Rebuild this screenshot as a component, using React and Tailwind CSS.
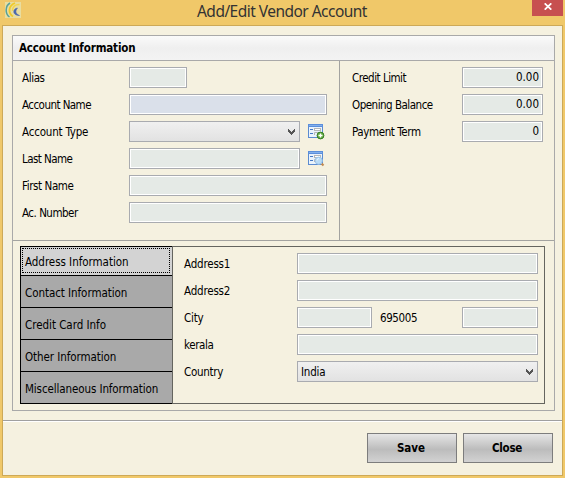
import React from "react";
import clsx from "clsx";

const fieldBase = "h-[21px] border border-[#a9abb0] shrink-0";

function Field({ className, value, blue }) {
  return (
    <div className={clsx(fieldBase, "bg-white p-px", className)}>
      <div
        className={clsx(
          "flex h-full w-full items-center justify-end pr-0.5 text-[11.5px] leading-none",
          blue ? "bg-[#dae0ea]" : "bg-[#e5eae6]"
        )}
      >
        <span>{value}</span>
      </div>
    </div>
  );
}

function Combo({ className, value }) {
  return (
    <div
      className={clsx(
        fieldBase,
        "flex items-center justify-between bg-linear-to-b from-[#f0f0f0] to-[#e2e2e2] pl-[3px] pr-1 text-[11.5px] leading-none",
        className
      )}
    >
      <span className="relative top-px tracking-[-0.2px]">{value}</span>
      <svg width="7" height="6" viewBox="0 0 7 6" shapeRendering="crispEdges" fill="#555">
        <path d="M0 0h1v1h1v1h1v1h1V2h1V1h1V0h1v3H6v1H5v1H4v1H3V5H2V4H1V3H0z" />
      </svg>
    </div>
  );
}

function Row({ label, labelClass, spacing, children }) {
  return (
    <div className="flex h-[21px] items-center">
      <div className={clsx("shrink-0 whitespace-nowrap", labelClass)}>
        <span className={clsx("relative top-px", spacing)}>{label}</span>
      </div>
      {children}
    </div>
  );
}

function FormIcon({ kind }) {
  return (
    <svg className="ml-2 shrink-0" width="17" height="16" viewBox="0 0 17 16">
      <rect x="0.5" y="0.5" width="14" height="13" fill="#eaf3fc" stroke="#5b8bd0" />
      <rect x="0" y="0" width="15" height="3" fill="#5c8fdb" />
      <rect x="1" y="1" width="13" height="1" fill="#83b0ec" />
      <path d="M2 5.500h3M2 9.500h3" stroke="#4478c4" />
      <rect x="6.500" y="4.500" width="6" height="2" fill="#fff" stroke="#b4b6b8" />
      <path d="M6.500 11V8.500h4" fill="none" stroke="#b4b6b8" />
      {kind === "add" ? (
        <g>
          <circle cx="12.500" cy="11.500" r="3.400" fill="#63ad3f" stroke="#347c24" />
          <path d="M12.500 9.500v4M10.500 11.500h4" stroke="#fff" strokeWidth="1.300" />
        </g>
      ) : (
        <g>
          <path d="M13.500 12.500l2 2" stroke="#c28a50" strokeWidth="2.200" />
          <circle cx="10.700" cy="9.700" r="3.600" fill="#b9dbf6" stroke="#9bc4e8" />
          <path d="M9 9.500a2 2 0 0 1 2-2" stroke="#e9f5ff" fill="none" />
        </g>
      )}
    </svg>
  );
}

const tabs = [
  ["Address Information", "h-7", "tracking-[-0.04px]"],
  ["Contact Information", "h-[31px]", "tracking-[-0.06px]"],
  ["Credit Card Info", "h-[31px]", "tracking-[-0.03px]"],
  ["Other Information", "h-[31px]", "tracking-[-0.08px]"],
  ["Miscellaneous Information", "h-[31px]", "tracking-[-0.1px]"],
];

function Button({ spacing, children }) {
  return (
    <button className="h-[30px] w-[90px] border border-[#7d7d7d] bg-linear-to-b from-[#e6e6e6] via-[#bcbcbc] via-55% to-[#d2d2d2] text-[11.5px] font-bold leading-none">
      <span className={clsx("relative top-px", spacing)}>{children}</span>
    </button>
  );
}

export default function App() {
  const left = "w-[107px]";
  const right = "w-[110px]";
  const addr = "w-[113px]";
  return (
    <div className="flex h-[478px] w-[565px] flex-col overflow-hidden bg-[#f0c869] font-['DejaVu_Sans_Condensed','DejaVu_Sans',sans-serif] text-[11.5px] leading-none text-black [font-stretch:condensed]">
      <header className="flex h-[25px] shrink-0 items-start">
        <svg className="ml-[5px] mt-0.5 shrink-0" width="16" height="16" viewBox="0 0 16 16">
          <rect width="16" height="16" fill="#e8dda0" />
          <path d="M5 1C0 4 0 12 4.500 15" fill="none" stroke="#55a099" strokeWidth="1.500" />
          <path d="M10 1C3 4 3 11 8 14.500" fill="none" stroke="#f0ca28" strokeWidth="1.800" />
          <path d="M14.500 2.500C10 2.500 7.500 5 7.500 9" fill="none" stroke="#f2d44d" strokeWidth="1.400" />
          <path d="M12.500 6C7 7 7.500 13.500 14.500 13.500C10.500 12 9.900 9 12.500 6z" fill="#4b68ad" stroke="#4b68ad" strokeWidth="0.600" />
        </svg>
        <h1 className="ml-44 mt-0.5 w-[171px] shrink-0 whitespace-nowrap text-[15.5px] leading-[18px] tracking-[-0.53px] text-[#333] [font-family:'Noto_Sans',sans-serif] [font-stretch:normal]">
          Add/Edit Vendor Account
        </h1>
        <div className="ml-auto mr-0.5 flex h-4 w-[31px] items-center justify-center bg-[#c75050]">
          <svg className="-mt-[3px]" width="8" height="7" viewBox="0 0 8 7">
            <path d="M0.700 0.300l6.600 6.400M7.300 0.300L0.700 6.700" stroke="#fff" strokeWidth="1.700" />
          </svg>
        </div>
      </header>

      <main className="ml-0.5 flex h-[451px] w-[561px] shrink-0 flex-col border border-[#cda957] bg-[#f5f1e0]">
        <section className="ml-[9px] mt-[9px] flex h-[376px] w-[543px] shrink-0 flex-col border border-[#a9a9a9]">
          <h2 className="flex h-[25px] shrink-0 items-center border-b border-[#a9a9a9] bg-linear-to-b from-[#fafafa] via-[#efefef] to-[#f3f3f3] pl-1.5 text-[11.5px] font-bold">
            <span className="relative top-px tracking-[-0.15px]">Account Information</span>
          </h2>

          <div className="flex h-[180px] shrink-0 border-b border-[#a3a3a0]">
            <div className="flex w-[327px] shrink-0 flex-col gap-1.5 border-r border-[#a3a3a0] pl-[9px] pt-1.5">
              <Row label="Alias" labelClass={left} spacing="tracking-[-0.4px]"><Field className="w-[58px]" /></Row>
              <Row label="Account Name" labelClass={left} spacing="tracking-[-0.55px]"><Field className="w-[198px]" blue /></Row>
              <Row label="Account Type" labelClass={left} spacing="tracking-[-0.2px]">
                <Combo className="w-[171px]" />
                <FormIcon kind="add" />
              </Row>
              <Row label="Last Name" labelClass={left} spacing="tracking-[-0.55px]">
                <Field className="w-[171px]" />
                <FormIcon kind="find" />
              </Row>
              <Row label="First Name" labelClass={left} spacing="tracking-[-0.4px]"><Field className="w-[198px]" /></Row>
              <Row label="Ac. Number" labelClass={left} spacing="tracking-[-0.5px]"><Field className="w-[198px]" /></Row>
            </div>
            <div className="flex flex-col gap-1.5 pl-3 pt-1.5">
              <Row label="Credit Limit" labelClass={right} spacing="tracking-[-0.5px]"><Field className="w-[81px]" value="0.00" /></Row>
              <Row label="Opening Balance" labelClass={right} spacing="tracking-[-0.5px]"><Field className="w-[81px]" value="0.00" /></Row>
              <Row label="Payment Term" labelClass={right} spacing="tracking-[-0.4px]"><Field className="w-[81px]" value="0" /></Row>
            </div>
          </div>

          <div className="ml-[7px] mt-[5px] flex h-[158px] w-[525px] shrink-0 border border-[#65655f]">
            <nav className="-my-px -ml-px flex w-[152px] shrink-0 flex-col gap-px border border-r-0 border-black bg-black">
              {tabs.map(([name, height, spacing], i) => (
                <div
                  key={name}
                  className={clsx("flex shrink-0", height, i === 0 ? "bg-[#d3d3d3] pl-px pr-0.5 pt-px pb-0.5" : "bg-[#a9a9a9] pl-px pt-px")}
                >
                  <div
                    className={clsx(
                      "flex w-full items-center whitespace-nowrap border pl-0.5",
                      i === 0 ? "border-dotted border-black" : "border-transparent"
                    )}
                  >
                    <span className={clsx("relative top-0.5", spacing)}>{name}</span>
                  </div>
                </div>
              ))}
            </nav>
            <div className="flex flex-col gap-1.5 border-l border-[#65655f] pl-[11px] pt-1.5">
              <Row label="Address1" labelClass={addr} spacing="tracking-[-0.2px]"><Field className="w-[241px]" /></Row>
              <Row label="Address2" labelClass={addr} spacing="tracking-[-0.2px]"><Field className="w-[241px]" /></Row>
              <Row label="City" labelClass={addr} spacing="tracking-[-0.2px]">
                <Field className="w-[75px]" />
                <span className="relative top-px w-[90px] shrink-0 pl-2 tracking-[-0.4px]">695005</span>
                <Field className="w-[76px]" />
              </Row>
              <Row label="kerala" labelClass={addr} spacing="tracking-[-0.4px]"><Field className="w-[241px]" /></Row>
              <Row label="Country" labelClass={addr} spacing="tracking-[-0.3px]"><Combo className="w-[241px]" value="India" /></Row>
            </div>
          </div>
        </section>

        <footer className="mt-[9px] flex grow flex-col border-t border-[#a0a0a0]">
          <div className="flex grow items-start justify-end gap-1.5 border-t border-white pr-[9px] pt-[11px]">
            <Button spacing="-left-px">Save</Button>
            <Button spacing="-left-px tracking-[-0.3px]">Close</Button>
          </div>
        </footer>
      </main>
    </div>
  );
}
